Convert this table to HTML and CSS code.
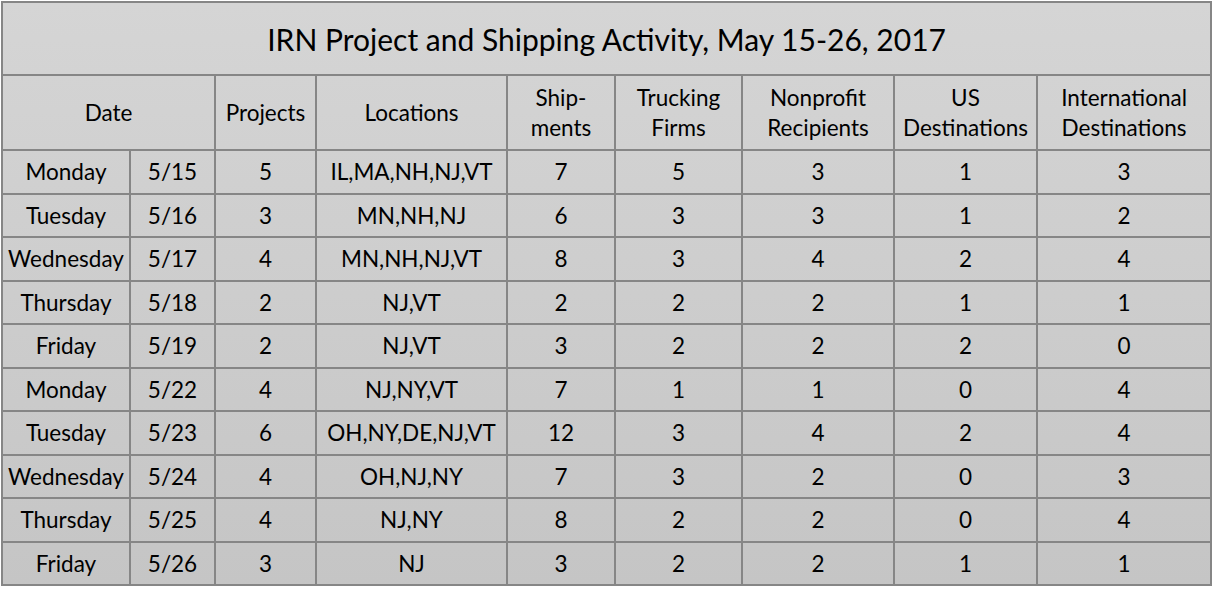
FILE: index.html
```html
<!DOCTYPE html>
<html>
<head>
<meta charset="utf-8">
<link rel="stylesheet" href="styles.css">
</head>
<body>
<table class="activity">
  <colgroup>
    <col class="c-day"><col class="c-date"><col class="c-proj"><col class="c-loc"><col class="c-ship"><col class="c-truck"><col class="c-np"><col class="c-us"><col class="c-intl">
  </colgroup>
  <thead>
    <tr class="title-row"><th colspan="9">IRN Project and Shipping Activity, May 15-26, 2017</th></tr>
    <tr class="head-row">
      <th colspan="2">Date</th>
      <th>Projects</th>
      <th>Locations</th>
      <th>Ship-<br>ments</th>
      <th>Trucking<br>Firms</th>
      <th>Nonprofit<br>Recipients</th>
      <th>US<br>Destinations</th>
      <th>International<br>Destinations</th>
    </tr>
  </thead>
  <tbody>
    <tr><td>Monday</td><td>5/15</td><td>5</td><td>IL,MA,NH,NJ,VT</td><td>7</td><td>5</td><td>3</td><td>1</td><td>3</td></tr>
    <tr><td>Tuesday</td><td>5/16</td><td>3</td><td>MN,NH,NJ</td><td>6</td><td>3</td><td>3</td><td>1</td><td>2</td></tr>
    <tr><td>Wednesday</td><td>5/17</td><td>4</td><td>MN,NH,NJ,VT</td><td>8</td><td>3</td><td>4</td><td>2</td><td>4</td></tr>
    <tr><td>Thursday</td><td>5/18</td><td>2</td><td>NJ,VT</td><td>2</td><td>2</td><td>2</td><td>1</td><td>1</td></tr>
    <tr><td>Friday</td><td>5/19</td><td>2</td><td>NJ,VT</td><td>3</td><td>2</td><td>2</td><td>2</td><td>0</td></tr>
    <tr><td>Monday</td><td>5/22</td><td>4</td><td>NJ,NY,VT</td><td>7</td><td>1</td><td>1</td><td>0</td><td>4</td></tr>
    <tr><td>Tuesday</td><td>5/23</td><td>6</td><td>OH,NY,DE,NJ,VT</td><td>12</td><td>3</td><td>4</td><td>2</td><td>4</td></tr>
    <tr><td>Wednesday</td><td>5/24</td><td>4</td><td>OH,NJ,NY</td><td>7</td><td>3</td><td>2</td><td>0</td><td>3</td></tr>
    <tr><td>Thursday</td><td>5/25</td><td>4</td><td>NJ,NY</td><td>8</td><td>2</td><td>2</td><td>0</td><td>4</td></tr>
    <tr><td>Friday</td><td>5/26</td><td>3</td><td>NJ</td><td>3</td><td>2</td><td>2</td><td>1</td><td>1</td></tr>
  </tbody>
</table>
</body>
</html>
```
FILE: styles.css
```css
html, body {
  margin: 0;
  padding: 0;
  background: #ffffff;
}
body {
  padding: 1px 0 0 1px;
}
.activity {
  border-collapse: collapse;
  table-layout: fixed;
  width: 1211px;
  font-family: Lato, "Open Sans", sans-serif;
  color: #000;
  background: linear-gradient(#d5d5d5, #c5c5c5);
}
.activity th, .activity td {
  border: 2px solid #868686;
  text-align: center;
  padding: 0;
  font-weight: normal;
  white-space: nowrap;
  overflow: hidden;
}
.c-day { width: 128px; }
.c-date { width: 85px; }
.c-proj { width: 101px; }
.c-loc { width: 191px; }
.c-ship { width: 108px; }
.c-truck { width: 127px; }
.c-np { width: 152px; }
.c-us { width: 143px; }
.c-intl { width: 174px; }
.title-row th {
  height: 71px;
  font-size: 30px;
}
.head-row th {
  height: 72px;
  padding-top: 1px;
  font-size: 22.5px;
  line-height: 30px;
}
tbody td {
  height: 41.5px;
  padding-top: 2px;
  font-size: 22.5px;
}
```
